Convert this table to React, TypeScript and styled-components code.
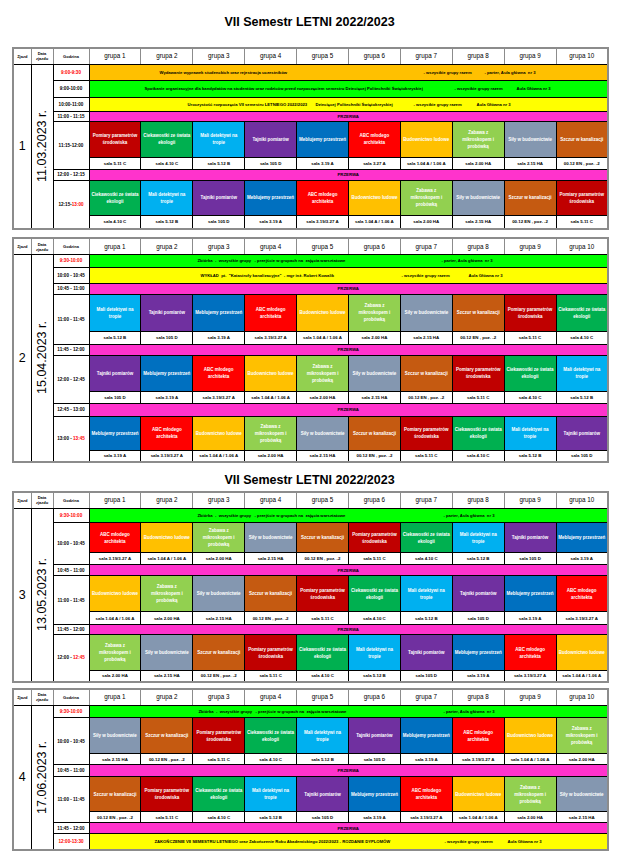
import styled, { createGlobalStyle } from "styled-components";
import { Fragment } from "react";

const GlobalStyle = createGlobalStyle`
  html, body {
    margin: 0;
    padding: 0;
    background: #fff;
  }
  body {
    font-family: "Liberation Sans", Arial, sans-serif;
    color: #000;
  }
`;

type Course = { name: string; color: string; room: string };
type Time = [string, string];
type Segment = { text: string; x: number };

type Row =
  | { kind: "banner"; time: Time; color: string; h: number; segments: Segment[] }
  | { kind: "break"; time: Time; h: number }
  | { kind: "lesson"; time: Time; h: number; roomH: number; shift: number; rooms?: Record<number, string> };

type Session = {
  no: string;
  date: string;
  headH: number;
  top: number;
  title?: { top: number; bottom: number };
  rows: Row[];
};

const COURSES: Course[] = [
  { name: "Pomiary parametrów\nśrodowiska", color: "#C00000", room: "sala 5.11 C" },
  { name: "Ciekawostki ze świata\nekologii", color: "#00B050", room: "sala 4.10 C" },
  { name: "Mali detektywi na\ntropie", color: "#00B0F0", room: "sala 5.12 B" },
  { name: "Tajniki pomiarów", color: "#7030A0", room: "sala 105 D" },
  { name: "Meblujemy przestrzeń", color: "#0070C0", room: "sala 3.19 A" },
  { name: "ABC młodego\narchitekta", color: "#FF0000", room: "sala 3.19/3.27 A" },
  { name: "Budownictwo ludowe", color: "#FFC000", room: "sala 1.04 A / 1.06 A" },
  { name: "Zabawa z\nmikroskopem i\nprobówką", color: "#92D050", room: "sala 2.00 HA" },
  { name: "Siły w budownictwie", color: "#8497B0", room: "sala 2.15 HA" },
  { name: "Szczur w kanalizacji", color: "#C55A11", room: "00.12 EN , poz. -2" },
];

const GROUPS = Array.from({ length: 10 }, (_, i) => `grupa ${i + 1}`);
const GROUP_LEFT = 88;

const ORANGE = "#FFC000";
const GREEN = "#00FF00";
const YELLOW = "#FFFF00";

const ALL = "- wszystkie grupy razem";
const AULA = "Aula Główna nr 3";
const GATHER = "Zbiórka  -  wszystkie grupy   - przejście w grupach na  zajęcia warsztatowe";
const GROUND = "- parter, Aula główna  nr 3";

const SESSIONS: Session[] = [
  {
    no: "1",
    date: "11.03.2023 r.",
    headH: 16,
    top: 0,
    title: { top: 15, bottom: 18 },
    rows: [
      {
        kind: "banner", time: ["", "9:00-9:30"], color: ORANGE, h: 16,
        segments: [
          { text: "Wydawanie wyprawek studenckich oraz rejestracja uczestników", x: 158 },
          { text: ALL, x: 422 },
          { text: GROUND, x: 483 },
        ],
      },
      {
        kind: "banner", time: ["9:00-10:00", ""], color: GREEN, h: 17,
        segments: [
          { text: "Spotkanie organizacyjne dla kandydatów na studentów oraz rodziców przed rozpoczęciem semestru Dziecięcej Politechniki Świętokrzyskiej", x: 143 },
          { text: ALL, x: 453 },
          { text: AULA, x: 515 },
        ],
      },
      {
        kind: "banner", time: ["10:00-11:00", ""], color: YELLOW, h: 14,
        segments: [
          { text: "Uroczystość rozpoczęcia VII semestru LETNIEGO 2022/2023", x: 186 },
          { text: "Dziecięcej Politechniki Świętokrzyskiej", x: 314 },
          { text: ALL, x: 412 },
          { text: AULA, x: 475 },
        ],
      },
      { kind: "break", time: ["11:00 - 11:15", ""], h: 10 },
      { kind: "lesson", time: ["11:15-12:00", ""], h: 36, roomH: 12, shift: 0, rooms: { 5: "sala 3.27 A" } },
      { kind: "break", time: ["12:00 - 12:15", ""], h: 11 },
      { kind: "lesson", time: ["12:15-", "13:00"], h: 35, roomH: 14, shift: 1 },
    ],
  },
  {
    no: "2",
    date: "15.04.2023 r.",
    headH: 16.5,
    top: 7,
    rows: [
      {
        kind: "banner", time: ["", "9:30-10:00"], color: GREEN, h: 12.5,
        segments: [
          { text: GATHER, x: 196 },
          { text: GROUND, x: 440 },
        ],
      },
      {
        kind: "banner", time: ["10:00 - 10:45", ""], color: YELLOW, h: 16.5,
        segments: [
          { text: "WYKŁAD  pt.  \"Katastrofy kanalizacyjne\"  - mgr inż. Robert Kowalik", x: 199 },
          { text: ALL, x: 400 },
          { text: AULA, x: 467 },
        ],
      },
      { kind: "break", time: ["10:45 - 11:00", ""], h: 10.5 },
      { kind: "lesson", time: ["11:00 - 11:45", ""], h: 37, roomH: 13, shift: 2 },
      { kind: "break", time: ["11:45 - 12:00", ""], h: 11 },
      { kind: "lesson", time: ["12:00 - 12:45", ""], h: 36, roomH: 12.5, shift: 3 },
      { kind: "break", time: ["12:45 - 13:00", ""], h: 12.5 },
      { kind: "lesson", time: ["13:00 - ", "13:45"], h: 34, roomH: 11.5, shift: 4 },
    ],
  },
  {
    no: "3",
    date: "13.05.2023 r.",
    headH: 17,
    top: 0,
    title: { top: 10, bottom: 4 },
    rows: [
      {
        kind: "banner", time: ["", "9:30-10:00"], color: GREEN, h: 14,
        segments: [
          { text: GATHER, x: 196 },
          { text: GROUND, x: 442 },
        ],
      },
      { kind: "lesson", time: ["10:00 - 10:45", ""], h: 30, roomH: 12, shift: 5 },
      { kind: "break", time: ["10:45 - 11:00", ""], h: 11 },
      { kind: "lesson", time: ["11:00 - 11:45", ""], h: 36, roomH: 13, shift: 6 },
      { kind: "break", time: ["11:45 - 12:00", ""], h: 10 },
      { kind: "lesson", time: ["12:00 - ", "12:45"], h: 36, roomH: 11, shift: 7 },
    ],
  },
  {
    no: "4",
    date: "17.06.2023 r.",
    headH: 17,
    top: 5,
    rows: [
      {
        kind: "banner", time: ["", "9:30-10:00"], color: GREEN, h: 12,
        segments: [
          { text: GATHER, x: 197 },
          { text: GROUND, x: 442 },
        ],
      },
      { kind: "lesson", time: ["10:00 - 10:45", ""], h: 36, roomH: 11, shift: 8 },
      { kind: "break", time: ["10:45 - 11:00", ""], h: 12 },
      { kind: "lesson", time: ["11:00 - 11:45", ""], h: 35, roomH: 11, shift: 9 },
      { kind: "break", time: ["11:45 - 12:00", ""], h: 11 },
      {
        kind: "banner", time: ["", "12:00-13:30"], color: YELLOW, h: 16,
        segments: [
          { text: "ZAKOŃCZENIE VII SEMESTRU LETNIEGO oraz Zakończenie Roku Akademickiego 2022/2023 - ROZDANIE DYPLOMÓW", x: 153 },
          { text: ALL, x: 443 },
          { text: AULA, x: 506 },
        ],
      },
    ],
  },
];

const Page = styled.div`
  width: 595px;
  padding: 0 0 12px 12px;
`;

const Title = styled.h1<{ $top: number; $bottom: number }>`
  margin: ${(p) => p.$top}px 0 ${(p) => p.$bottom}px;
  height: 14px;
  line-height: 14px;
  font-size: 12.5px;
  font-weight: bold;
  text-align: center;
`;

const Grid = styled.table<{ $top: number }>`
  margin-top: ${(p) => p.$top}px;
  width: 595px;
  table-layout: fixed;
  border-collapse: collapse;
  border: 2px solid #8c8c8c;
`;

const Row = styled.tr<{ $h: number }>`
  height: ${(p) => p.$h}px;
`;

const HeadCell = styled.th<{ $small?: boolean }>`
  padding: 0;
  border: 1px solid #000;
  border-right-color: #8c8c8c;
  background: #fff;
  font-size: ${(p) => (p.$small ? "4px" : "6.3px")};
  font-weight: ${(p) => (p.$small ? "bold" : "normal")};
  line-height: ${(p) => (p.$small ? "5px" : "8px")};
  white-space: pre-line;
  text-align: center;
  vertical-align: middle;
`;

const SessionCell = styled.td`
  padding: 0;
  border: 1px solid #000;
  font-size: 12.5px;
  text-align: center;
  vertical-align: middle;
`;

const DateCell = styled.td`
  padding: 0;
  border: 1px solid #000;
  text-align: center;
  vertical-align: middle;
`;

const DateText = styled.div`
  margin: 0 auto;
  writing-mode: vertical-rl;
  transform: rotate(180deg);
  font-size: 12.5px;
  line-height: 14px;
  white-space: nowrap;
`;

const TimeCell = styled.td`
  padding: 0;
  border: 1px solid #000;
  background: #fff;
  font-size: 4.6px;
  font-weight: bold;
  text-align: center;
  vertical-align: middle;
  white-space: pre;
`;

const Late = styled.span`
  color: #ff0000;
`;

const BannerCell = styled.td<{ $bg: string }>`
  padding: 0;
  border: 1px solid #000;
  background: ${(p) => p.$bg};
  vertical-align: middle;
  overflow: visible;
`;

const BannerLine = styled.div<{ $indent: number }>`
  display: flex;
  align-items: center;
  padding-left: ${(p) => p.$indent}px;
  font-size: 4.2px;
  font-weight: bold;
  white-space: pre;
`;

const BannerPart = styled.span<{ $w?: number }>`
  flex: none;
  width: ${(p) => (p.$w ? `${p.$w}px` : "auto")};
`;

const BreakCell = styled.td`
  padding: 0;
  border: 1px solid #000;
  background: #ff33cc;
  font-size: 4.3px;
  font-weight: bold;
  text-align: center;
  vertical-align: middle;
`;

const LessonCell = styled.td<{ $bg: string }>`
  padding: 0;
  border: 1px solid #000;
  background: ${(p) => p.$bg};
  color: #fff;
  font-size: 4.5px;
  font-weight: bold;
  line-height: 7px;
  text-align: center;
  vertical-align: middle;
  white-space: pre;
  overflow: hidden;
`;

const RoomCell = styled.td`
  padding: 0;
  border: 1px solid #000;
  background: #fff;
  font-size: 4.4px;
  font-weight: bold;
  text-align: center;
  vertical-align: middle;
  white-space: nowrap;
`;

const TimeLabel = ({ time }: { time: Time }) => (
  <>
    {time[0]}
    {time[1] && <Late>{time[1]}</Late>}
  </>
);

const Banner = ({ segments }: { segments: Segment[] }) => (
  <BannerLine $indent={segments[0].x - GROUP_LEFT}>
    {segments.map((s, i) => (
      <BannerPart key={i} $w={segments[i + 1] ? segments[i + 1].x - s.x : undefined}>
        {s.text}
      </BannerPart>
    ))}
  </BannerLine>
);

const bodyRowCount = (rows: Row[]) =>
  rows.reduce((n, r) => n + (r.kind === "lesson" ? 2 : 1), 0);

const SessionTable = ({ session }: { session: Session }) => {
  const span = bodyRowCount(session.rows);

  const lead = (i: number) =>
    i === 0 && (
      <>
        <SessionCell rowSpan={span}>{session.no}</SessionCell>
        <DateCell rowSpan={span}>
          <DateText>{session.date}</DateText>
        </DateCell>
      </>
    );

  return (
    <Grid $top={session.top}>
      <colgroup>
        <col style={{ width: 18 }} />
        <col style={{ width: 22 }} />
        <col style={{ width: 36 }} />
        {GROUPS.map((g) => (
          <col key={g} style={{ width: 51.9 }} />
        ))}
      </colgroup>
      <tbody>
        <Row $h={session.headH}>
          <HeadCell $small>Zjazd</HeadCell>
          <HeadCell $small>{"Data\nzjazdu"}</HeadCell>
          <HeadCell $small>Godzina</HeadCell>
          {GROUPS.map((g) => (
            <HeadCell key={g}>{g}</HeadCell>
          ))}
        </Row>
        {session.rows.map((row, i) => {
          if (row.kind === "banner") {
            return (
              <Row key={i} $h={row.h}>
                {lead(i)}
                <TimeCell>
                  <TimeLabel time={row.time} />
                </TimeCell>
                <BannerCell colSpan={10} $bg={row.color}>
                  <Banner segments={row.segments} />
                </BannerCell>
              </Row>
            );
          }
          if (row.kind === "break") {
            return (
              <Row key={i} $h={row.h}>
                {lead(i)}
                <TimeCell>
                  <TimeLabel time={row.time} />
                </TimeCell>
                <BreakCell colSpan={10}>PRZERWA</BreakCell>
              </Row>
            );
          }
          const courses = GROUPS.map((_, g) => COURSES[(g + row.shift) % COURSES.length]);
          return (
            <Fragment key={i}>
              <Row $h={row.h}>
                {lead(i)}
                <TimeCell rowSpan={2}>
                  <TimeLabel time={row.time} />
                </TimeCell>
                {courses.map((c, g) => (
                  <LessonCell key={g} $bg={c.color}>
                    {c.name}
                  </LessonCell>
                ))}
              </Row>
              <Row $h={row.roomH}>
                {courses.map((c, g) => (
                  <RoomCell key={g}>{row.rooms?.[g] ?? c.room}</RoomCell>
                ))}
              </Row>
            </Fragment>
          );
        })}
      </tbody>
    </Grid>
  );
};

export default function App() {
  return (
    <Page>
      <GlobalStyle />
      {SESSIONS.map((s) => (
        <Fragment key={s.no}>
          {s.title && (
            <Title $top={s.title.top} $bottom={s.title.bottom}>
              VII Semestr LETNI 2022/2023
            </Title>
          )}
          <SessionTable session={s} />
        </Fragment>
      ))}
    </Page>
  );
}
